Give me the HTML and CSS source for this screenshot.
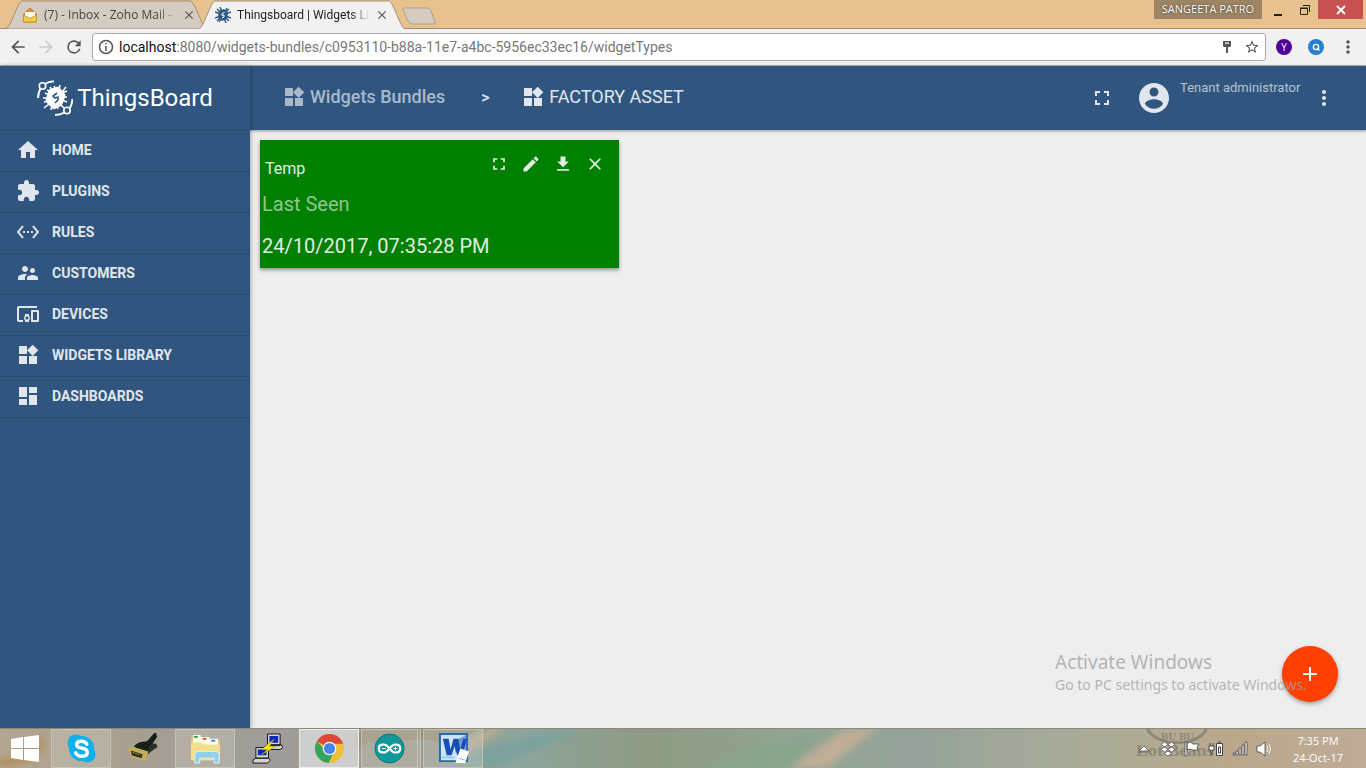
FILE: index.html
```html
<!DOCTYPE html>
<html lang="en">
<head>
<meta charset="utf-8">
<title>Thingsboard | Widgets Library</title>
<link rel="stylesheet" href="styles.css">
</head>
<body>
<svg class="sprite" aria-hidden="true">
  <symbol id="home" viewBox="0 0 24 24"><path d="M10 20v-6h4v6h5v-8h3L12 3 2 12h3v8z"/></symbol>
  <symbol id="plugin" viewBox="0 0 24 24"><path d="M20.5 11H19V7c0-1.1-.9-2-2-2h-4V3.5C13 2.12 11.88 1 10.5 1S8 2.12 8 3.5V5H4c-1.1 0-1.99.9-1.99 2v3.8H3.5c1.49 0 2.7 1.21 2.7 2.7s-1.21 2.7-2.7 2.7H2V20c0 1.1.9 2 2 2h3.8v-1.5c0-1.49 1.21-2.7 2.7-2.7 1.49 0 2.7 1.21 2.7 2.7V22H17c1.1 0 2-.9 2-2v-4h1.5c1.38 0 2.5-1.12 2.5-2.5S21.88 11 20.5 11z"/></symbol>
  <symbol id="rules" viewBox="0 0 24 24"><path d="M7.77 6.76L6.23 5.48.82 12l5.41 6.52 1.54-1.28L3.42 12l4.35-5.24zM7 13h2v-2H7v2zm10-2h-2v2h2v-2zm-6 2h2v-2h-2v2zm6.77-7.52l-1.54 1.28L20.58 12l-4.35 5.24 1.54 1.28L23.18 12l-5.41-6.52z"/></symbol>
  <symbol id="customers" viewBox="0 0 24 24"><path d="M16.5 12c1.38 0 2.49-1.12 2.49-2.5S17.88 7 16.5 7C15.12 7 14 8.12 14 9.5s1.12 2.5 2.5 2.5zM9 11c1.66 0 2.99-1.34 2.99-3S10.66 5 9 5C7.34 5 6 6.34 6 8s1.34 3 3 3zm7.5 3c-1.83 0-5.5.92-5.5 2.75V19h11v-2.25c0-1.83-3.67-2.75-5.5-2.75zM9 13c-2.33 0-7 1.17-7 3.5V19h7v-2.25c0-.85.33-2.34 2.37-3.47C10.5 13.1 9.66 13 9 13z"/></symbol>
  <symbol id="devices" viewBox="0 0 24 24"><path d="M3 6h18V4H3c-1.1 0-2 .9-2 2v12c0 1.1.9 2 2 2h4v-2H3V6zm10 6H9v1.78c-.61.55-1 1.33-1 2.22s.39 1.67 1 2.22V20h4v-1.78c.61-.55 1-1.34 1-2.22s-.39-1.67-1-2.22V12zm-2 5.5c-.83 0-1.5-.67-1.5-1.5s.67-1.5 1.5-1.5 1.5.67 1.5 1.5-.67 1.5-1.5 1.5zM22 8h-6c-.5 0-1 .5-1 1v10c0 .5.5 1 1 1h6c.5 0 1-.5 1-1V9c0-.5-.5-1-1-1zm-1 10h-4v-8h4v8z"/></symbol>
  <symbol id="widgets" viewBox="0 0 24 24"><path d="M13 13v8h8v-8h-8zM3 21h8v-8H3v8zM3 3v8h8V3H3zm13.66-1.31L11 7.34 16.66 13l5.66-5.66-5.66-5.65z"/></symbol>
  <symbol id="dashboard" viewBox="0 0 24 24"><path d="M3 13h8V3H3v10zm0 8h8v-6H3v6zm10 0h8V11h-8v10zm0-18v6h8V3h-8z"/></symbol>
  <symbol id="fullscreen" viewBox="0 0 24 24"><path d="M7 14H5v5h5v-2H7v-3zm-2-4h2V7h3V5H5v5zm12 7h-3v2h5v-5h-2v3zM14 5v2h3v3h2V5h-5z"/></symbol>
  <symbol id="account" viewBox="0 0 24 24"><path d="M12 2C6.48 2 2 6.48 2 12s4.48 10 10 10 10-4.48 10-10S17.52 2 12 2zm0 3c1.66 0 3 1.34 3 3s-1.34 3-3 3-3-1.34-3-3 1.34-3 3-3zm0 14.2c-2.5 0-4.71-1.28-6-3.22.03-1.99 4-3.08 6-3.08 1.99 0 5.97 1.09 6 3.08-1.29 1.94-3.5 3.22-6 3.22z"/></symbol>
  <symbol id="more" viewBox="0 0 24 24"><path d="M12 8c1.1 0 2-.9 2-2s-.9-2-2-2-2 .9-2 2 .9 2 2 2zm0 2c-1.1 0-2 .9-2 2s.9 2 2 2 2-.9 2-2-.9-2-2-2zm0 6c-1.1 0-2 .9-2 2s.9 2 2 2 2-.9 2-2-.9-2-2-2z"/></symbol>
  <symbol id="edit" viewBox="0 0 24 24"><path d="M3 17.25V21h3.75L17.81 9.94l-3.75-3.75L3 17.25zM20.71 7.04c.39-.39.39-1.02 0-1.41l-2.34-2.34c-.39-.39-1.02-.39-1.41 0l-1.83 1.83 3.75 3.75 1.83-1.83z"/></symbol>
  <symbol id="download" viewBox="0 0 24 24"><path d="M19 9h-4V3H9v6H5l7 7 7-7zM5 18v2h14v-2H5z"/></symbol>
  <symbol id="close" viewBox="0 0 24 24"><path d="M19 6.41L17.59 5 12 10.59 6.41 5 5 6.41 10.59 12 5 17.59 6.41 19 12 13.41 17.59 19 19 17.59 13.41 12z"/></symbol>
  <symbol id="add" viewBox="0 0 24 24"><path d="M19 13h-6v6h-2v-6H5v-2h6V5h2v6h6v2z"/></symbol>
  <symbol id="back" viewBox="0 0 24 24"><path d="M20 11H7.83l5.59-5.59L12 4l-8 8 8 8 1.41-1.41L7.83 13H20v-2z"/></symbol>
  <symbol id="forward" viewBox="0 0 24 24"><path d="M12 4l-1.41 1.41L16.17 11H4v2h12.17l-5.58 5.59L12 20l8-8z"/></symbol>
  <symbol id="reload" viewBox="0 0 24 24"><path d="M17.65 6.35A7.96 7.96 0 0 0 12 4a8 8 0 1 0 7.73 10h-2.08A6 6 0 1 1 12 6c1.66 0 3.14.69 4.22 1.78L13 11h7V4l-2.35 2.35z"/></symbol>
  <symbol id="star" viewBox="0 0 24 24"><path d="M22 9.24l-7.19-.62L12 2 9.19 8.63 2 9.24l5.46 4.73L5.82 21 12 17.27 18.18 21l-1.63-7.03L22 9.24zM12 15.4l-3.76 2.27 1-4.28-3.32-2.88 4.38-.38L12 6.1l1.71 4.04 4.38.38-3.32 2.88 1 4.28L12 15.4z"/></symbol>
</svg>

<header class="browser">
  <div class="strip">
    <div class="tab">
      <svg class="tab-shape" viewBox="0 0 200 29" preserveAspectRatio="none"><path d="M0 28.500C5 27 12 1 16 1H184C189 1 196 27 200 28.500" fill="#d5ccc1" stroke="#a18c75"/></svg>
      <svg class="favicon" viewBox="0 0 16 16"><path d="M1.500 7L8 1l6.500 6v8h-13z" fill="#d99427" stroke="#b77b20"/><path d="M3 5h10v7H3z" fill="#fff"/><path d="M1.500 8L8 11.500 14.500 8v7h-13z" fill="#f3ce4d" stroke="#c99625"/></svg>
      <span class="tab-title">(7) - Inbox - Zoho Mail -</span>
      <button class="tab-close" aria-label="Close tab"><svg><use href="#close"/></svg></button>
    </div>
    <div class="tab active">
      <svg class="tab-shape" viewBox="0 0 206 29" preserveAspectRatio="none"><path d="M0 29C5 27 12 1 16 1H190C194 1 201 27 206 29" fill="#f1f1f1" stroke="#a18c75"/></svg>
      <svg class="favicon" viewBox="0 0 16 16"><g stroke="#305680" stroke-width="1.500"><path d="M5 0l6 16M12 1L4 15M0 5l16 6M0 11l16-6M2 2l12 12M2 14L14 2"/></g><path d="M9 2l4 4-1 6-5 2-4-4 1-6z" fill="#305680"/><path d="M9.500 5.500L7 6.500v2l2-.500v2l-2 1" fill="none" stroke="#fff"/></svg>
      <span class="tab-title">Thingsboard | Widgets Li</span>
      <button class="tab-close" aria-label="Close tab"><svg><use href="#close"/></svg></button>
    </div>
    <button class="new-tab" aria-label="New tab"><svg viewBox="0 0 36 18"><path d="M3 1h23q3 0 4 3l4 11q1 2-2 2H11q-3 0-4-3L2 3q-1-2 1-2z" fill="#d5ccc1" stroke="#b49c80"/></svg></button>
    <div class="window-controls">
      <span class="profile">SANGEETA PATRO</span>
      <button class="win" aria-label="Minimize"><svg viewBox="0 0 12 12"><path d="M2 10h8v2H2z"/></svg></button>
      <button class="win" aria-label="Restore"><svg viewBox="0 0 12 12" fill="none" stroke="#222"><path d="M1.500 4.500h7v6h-7zM1 4h8M4 1.500h6.500V8"/></svg></button>
      <button class="win win-close" aria-label="Close"><svg viewBox="0 0 12 12" fill="none" stroke="#fff" stroke-width="2"><path d="M2 2l8 8M10 2l-8 8"/></svg></button>
    </div>
  </div>
  <div class="toolbar">
    <button class="tool" aria-label="Back"><svg><use href="#back"/></svg></button>
    <button class="tool disabled" aria-label="Forward" disabled><svg><use href="#forward"/></svg></button>
    <button class="tool" aria-label="Reload"><svg><use href="#reload"/></svg></button>
    <div class="address">
      <svg class="small" viewBox="0 0 16 16" fill="none" stroke="#555" stroke-width="1.500"><circle cx="8" cy="8" r="6.500"/><path d="M8 7v5M8 4v1.600"/></svg>
      <div class="url">localhost<span>:8080/widgets-bundles/c0953110-b88a-11e7-a4bc-5956ec33ec16/widgetTypes</span></div>
      <button class="tool tight" aria-label="Saved password"><svg viewBox="0 0 16 16"><path d="M4 2h8v5l-1 1H9v6H7V8H5L4 7zM6 3.500v1.200h4V3.500z" fill-rule="evenodd"/></svg></button>
      <button class="tool tight" aria-label="Bookmark"><svg><use href="#star"/></svg></button>
    </div>
    <button class="extension purple" aria-label="Y extension">Y</button>
    <button class="extension blue" aria-label="Search extension"><svg viewBox="0 0 16 16" fill="none" stroke="#fff" stroke-width="1.500"><circle cx="8" cy="8" r="3"/><path d="M9 9l3 3"/></svg></button>
    <button class="tool last" aria-label="Browser menu"><svg><use href="#more"/></svg></button>
  </div>
</header>

<div class="app">
  <aside class="sidebar">
    <div class="brand">
      <svg viewBox="0 0 36 36" fill="none" stroke="#fff" stroke-width="1.600"><path d="M19 7q2-1 3 0l6 7q1 1 0 3l-2 6q-1 2-2 3l-6 3q-2 1-3-1l-6-6q-1-2 0-3l2-7q0-2 2-3z" fill="#fff" stroke="none"/><path d="M13 7l3 5M17 6l2 4M23 5l-1 5M29 7l-4 5M25 13l5-2M26 17h4M25 20l5 2M23 24l4 4M20 25l1 4M15 25l-1 5M12 24l-5 4M12 21l-5 1M11 18H6M12 15l-4-2M14 12l-4-2"/><path d="M20 13l-4 3 2 2 3-1v3l-3 3" stroke="#305680"/><circle cx="5.500" cy="6" r="3.200"/><circle cx="30" cy="30.500" r="3.200"/><path d="M8 4q4-3 9-2.500M3.500 8.500Q1 13 1 18M33 28q2-4 2.500-9M27.500 32.500q-4 2.500-9.500 2.500" stroke-width="2"/></svg>
      <span>ThingsBoard</span>
    </div>
    <nav class="menu">
      <a href="#"><svg><use href="#home"/></svg>HOME</a>
      <a href="#"><svg><use href="#plugin"/></svg>PLUGINS</a>
      <a href="#"><svg><use href="#rules"/></svg>RULES</a>
      <a href="#"><svg><use href="#customers"/></svg>CUSTOMERS</a>
      <a href="#"><svg><use href="#devices"/></svg>DEVICES</a>
      <a href="#"><svg><use href="#widgets"/></svg>WIDGETS LIBRARY</a>
      <a href="#"><svg><use href="#dashboard"/></svg>DASHBOARDS</a>
    </nav>
  </aside>
  <section class="page">
    <header class="topbar">
      <nav class="crumbs">
        <a href="#" class="parent"><svg><use href="#widgets"/></svg>Widgets Bundles</a>
        <span class="arrow">&gt;</span>
        <span class="crumb"><svg><use href="#widgets"/></svg>FACTORY ASSET</span>
      </nav>
      <button class="icon-btn full" aria-label="Fullscreen"><svg><use href="#fullscreen"/></svg></button>
      <svg class="avatar"><use href="#account"/></svg>
      <span class="role">Tenant administrator</span>
      <button class="icon-btn" aria-label="User menu"><svg><use href="#more"/></svg></button>
    </header>
    <main class="content">
      <article class="widget">
        <div class="widget-head">
          <h2>Temp</h2>
          <div class="actions">
            <button aria-label="Fullscreen widget"><svg><use href="#fullscreen"/></svg></button>
            <button aria-label="Edit widget"><svg><use href="#edit"/></svg></button>
            <button aria-label="Export widget"><svg><use href="#download"/></svg></button>
            <button aria-label="Remove widget"><svg><use href="#close"/></svg></button>
          </div>
        </div>
        <div class="label">Last Seen</div>
        <div class="value">24/10/2017, 07:35:28 PM</div>
      </article>
      <button class="fab" aria-label="Add widget type"><svg><use href="#add"/></svg></button>
      <div class="watermark"><div class="wm-title">Activate Windows</div><div class="wm-text">Go to PC settings to activate Windows.</div></div>
    </main>
  </section>
</div>

<footer class="taskbar">
  <svg class="wallpaper" viewBox="0 0 1366 40" preserveAspectRatio="none">
    <defs>
      <linearGradient id="wall"><stop offset="0" stop-color="#b3a68f"/><stop offset=".1" stop-color="#a89f92"/><stop offset=".2" stop-color="#a09c9a"/><stop offset=".3" stop-color="#9b9a8c"/><stop offset=".38" stop-color="#8ea69d"/><stop offset=".47" stop-color="#8e9a83"/><stop offset=".58" stop-color="#92a591"/><stop offset=".67" stop-color="#95a39a"/><stop offset=".8" stop-color="#abac98"/><stop offset=".9" stop-color="#baa88c"/><stop offset="1" stop-color="#bfab96"/></linearGradient>
      <filter id="soft" x="-20%" y="-20%" width="140%" height="140%"><feGaussianBlur stdDeviation="4"/></filter>
    </defs>
    <path d="M0 0h1366v40H0z" fill="url(#wall)"/>
    <g filter="url(#soft)"><path d="M0 30q30-2 42-25q5 15-10 26L0 40z" fill="#b48c54"/><path d="M480 20l80-20h20l-80 40h-40z" fill="#7da29d"/><path d="M790 40l55-40h32l-50 40z" fill="#c0ad97"/><path d="M700 40l50-20 80-20-40 40z" fill="#8aa58e"/><path d="M450 20l40-20h15l-48 28z" fill="#c0ad91"/></g>
    <path d="M350 20Q355 1 372 0h108q-18 10-30 18-20-10-50-6-20 4-32 1-10 10-18 7z" fill="#927d5f" opacity=".5"/>
    <g class="wall-text"><ellipse cx="1177" cy="-4" rx="30" ry="18" fill="none" stroke="#8f8779" stroke-width="3"/><text x="1161" y="11" font-size="11">BU BU</text><text x="1136" y="28" font-size="18">Lot Beans</text></g>
  </svg>
  <div class="apps">
    <button class="task start" aria-label="Start"><svg viewBox="0 0 28 28" fill="#fff"><path d="M0 4l12-2v11H0zM13 2l15-2v13H13zM0 14h12v11L0 23zM13 14h15v13l-15-2z"/></svg></button>
    <button class="task open" aria-label="Skype"><svg viewBox="0 0 32 32"><circle cx="16" cy="16" r="13" fill="#0fb1ec"/><circle cx="10" cy="10" r="8.500" fill="#0fb1ec"/><circle cx="22" cy="22" r="8.500" fill="#0fb1ec"/><path d="M21.500 11.500q-1.500-3-5.500-3-5 0-5 3.500 0 2.500 5 3.500 6 1 6 4.500 0 4-6 4-4.500 0-6-3.500" fill="none" stroke="#fff" stroke-width="3.500" stroke-linecap="round"/></svg></button>
    <button class="task" aria-label="Serial terminal"><svg viewBox="0 0 32 32"><path d="M6 14q4-5 10-5 4 0 6-3l5-6h2l1 4-4 6q-1 9-7 12z" fill="#182019"/><path d="M22 14q3-4 7-3 3 4-1 5l-9 7z" fill="#2c3328"/><path d="M0 16l4-2 17 5-3 10-14-4z" fill="#c2ae56"/><path d="M3 18l12 4-1 4-10-3z" fill="#292a1b"/><path d="M5 20l8 3" stroke="#e3d797" stroke-dasharray="1 1"/></svg></button>
    <button class="task open" aria-label="File Explorer"><svg viewBox="0 0 32 32"><path d="M1 5h10l3 3h17v20H1z" fill="#e7c565"/><path d="M3 2h8v8H3zM11 4h9v8h-9zM20 6h9v8h-9z" fill="#fffbe9"/><path d="M4 3h4v2H4z" fill="#2a9d42"/><path d="M13 5h4v2h-4z" fill="#df553a"/><path d="M22 7h4v2h-4z" fill="#328fcf"/><path d="M1 10h11l2 2h17v16H1z" fill="#f6df8b"/><path d="M5 31V22q0-3 3-3h18q4 0 4 3v9h-5v-5H10v5z" fill="#94cfea" stroke="#d9f2fb"/></svg></button>
    <button class="task" aria-label="PuTTY"><svg viewBox="0 0 32 32"><g fill="#d5d5ce" stroke="#161616"><path d="M16 1h13v12H16zM13 14l4-2h13l2 3-3 2H13z"/><path d="M4 15h13v11H4zM1 28l3-2h13l2 2-3 3H1z"/></g><path d="M18 3h9v7h-9zM6 17h9v6H6z" fill="#0929c4"/><path d="M23 6L10 17h6l-7 6 15-9h-6z" fill="#f7ea18" stroke="#a98d00" stroke-width=".500"/></svg></button>
    <button class="task open current" aria-label="Chrome"><svg viewBox="0 0 32 32"><circle cx="16" cy="16" r="15" fill="#efbf3b"/><path d="M16 16L3 8.500A15 15 0 0 1 29 8.500L30 11H16z" fill="#dc493a"/><path d="M16 16l-5 1-8-8.500A15 15 0 0 0 15 31l6-12z" fill="#38a35a"/><circle cx="16" cy="16" r="7" fill="#fff"/><circle cx="16" cy="16" r="5.800" fill="#4285e8"/></svg></button>
    <button class="task open stacked" aria-label="Arduino"><svg viewBox="0 0 32 32"><circle cx="16" cy="16" r="15" fill="#12979b" stroke="#08777c"/><path d="M16 16q-4-5-7-4-4 0-4 4t4 4q3 1 7-4t7-4q4 0 4 4t-4 4q-3 1-7-4z" fill="none" stroke="#fff" stroke-width="2.200"/><path d="M8 16h4M20 16h4M22 14v4" stroke="#fff"/></svg></button>
    <button class="task open" aria-label="Word"><svg viewBox="0 0 32 32"><path d="M2 1h28v28H2z" fill="#cfe2f6" stroke="#2369b4" stroke-width="2"/><path d="M17 8l12-6v18H18z" fill="#719fda"/><path d="M5 6h6l2 11 3-11h5l2 11 3-11h4l-5 17h-5l-3-9-3 9H9z" fill="#174fae"/><path d="M20 25l3-9 9 3-4 12H18z" fill="#fff"/><path d="M4 25h13M21 26l7 2" stroke="#8aafd9"/></svg></button>
  </div>
  <div class="tray">
    <svg viewBox="0 0 16 16" fill="#fff" stroke="#666"><path d="M3 10l5-5 5 5zM3 11h10"/></svg>
    <svg viewBox="0 0 16 16" fill="#fff" stroke="#555" stroke-width=".800"><path d="M4.500 1L8 3.500 4.500 6 1 3.500zM11.500 1L15 3.500 11.500 6 8 3.500zM4.500 6L8 8.500 4.500 11 1 8.500zM11.500 6L15 8.500 11.500 11 8 8.500zM8 10l4 2.500L8 15l-4-2.500z"/></svg>
    <svg viewBox="0 0 16 16" fill="#fff" stroke="#444" stroke-width=".800"><path d="M1 1h2v14H1zM3 2q4-2 6 1h6l-2 3 1 3H9q-3-2-6 0z"/></svg>
    <svg viewBox="0 0 16 16" fill="#fff" stroke="#444"><path d="M8.500 2.500h6v12h-6z"/><path d="M10.500 6h2v6h-2zM10 1h3"/><path d="M2 2v3M5 2v3M1 5h5v4H4v5H3V9H1z"/></svg>
    <svg viewBox="0 0 16 16" fill="#fff" stroke="#444" stroke-width=".800"><path d="M1 12h2v2H1zM4 10h2v4H4zM7 7h2v7H7zM10 4h2v10h-2zM13 1h2v13h-2z"/></svg>
    <svg viewBox="0 0 16 16" fill="#fff" stroke="#444" stroke-width=".800"><path d="M1 5h3l5-4v14l-5-4H1z"/><path d="M11 5q2 3 0 6M13 3q3 5 0 10" fill="none" stroke="#fff"/></svg>
  </div>
  <div class="clock"><div>7:35 PM</div><div>24-Oct-17</div></div>
</footer>
</body>
</html>
```
FILE: styles.css
```css
* { box-sizing: border-box; }
body { margin: 0; height: 100vh; display: flex; flex-direction: column; overflow: hidden; font-family: Roboto, sans-serif; color: #e1e6ec; }
button { border: 0; padding: 0; background: none; color: inherit; font: inherit; display: flex; align-items: center; justify-content: center; }
a { color: inherit; text-decoration: none; }
svg { display: block; flex: none; fill: currentColor; }
svg[fill="none"] { fill: none; }
svg[fill="#fff"] { fill: #fff; }
.sprite { position: absolute; width: 0; height: 0; }

.browser { font-family: "Open Sans", "Noto Sans", sans-serif; color: #555; background: #f1f1f1; }
.strip { height: 29px; display: flex; padding-left: 6px; background: #e7c28e; border-bottom: 1px solid #a18c75; }
.tab { position: relative; z-index: 0; display: flex; align-items: center; width: 200px; height: 29px; padding: 0 9px 0 16px; font-size: 12px; color: #444; }
.tab.active { width: 206px; margin-left: -7px; padding-right: 15px; color: #222; z-index: 1; }
.active .tab-title { font-family: Roboto, sans-serif; }
.tab-shape { position: absolute; inset: 0; width: 100%; height: 100%; z-index: -1; }
.favicon { width: 16px; height: 16px; }
.tab-title { flex: 1; margin-left: 6px; overflow: hidden; white-space: nowrap; mask-image: linear-gradient(90deg, #000 85%, transparent); }
.tab-close { width: 16px; height: 16px; margin-left: 4px; color: #555; }
.tab-close svg { width: 14px; height: 14px; }
.new-tab { width: 36px; height: 18px; margin: 7px 0 0 -4px; }
.new-tab svg { width: 36px; height: 18px; }
.window-controls { margin-left: auto; display: flex; align-items: flex-start; color: #222; }
.profile { width: 108px; height: 19px; margin-right: 2px; background: #9d8563; color: #fff; font-size: 11px; line-height: 18px; text-align: center; text-shadow: 0 0 2px #222; }
.win { width: 27px; height: 19px; }
.win svg { width: 12px; height: 12px; }
.win-close { width: 45px; margin-right: 3px; background: #c75050; }
.toolbar { height: 37px; display: flex; align-items: center; padding: 0 8px 0 4px; border-bottom: 1px solid #b6b4b6; }
.tool { width: 28px; height: 28px; }
.tool svg { width: 20px; height: 20px; }
.tool.disabled { color: #ccc; }
.tool.last { width: 20px; }
.tool.tight { width: 25px; }
.tool.tight svg { width: 16px; height: 16px; }
.address { flex: 1; height: 28px; display: flex; align-items: center; margin: 0 10px 0 4px; padding: 0 1px 0 5px; background: #fff; border: 1px solid #aaa; border-radius: 3px; }
.small { width: 16px; height: 16px; }
.url { flex: 1; margin-left: 5px; font-family: Roboto, sans-serif; font-size: 14px; color: #111; white-space: nowrap; }
.url span { color: #777; }
.extension { width: 16px; height: 16px; border-radius: 50%; margin-right: 16px; color: #fff; font-size: 10px; }
.extension svg { width: 14px; height: 14px; }
.purple { background: #510097; }
.blue { margin-right: 14px; background: #2a7fd0; }

.app { flex: 1; min-height: 0; display: flex; background: #eee; }
.sidebar { position: relative; z-index: 2; width: 250px; background: #305680; box-shadow: 1px 0 4px rgba(0, 0, 0, .3); }
.brand { height: 64px; display: flex; align-items: center; justify-content: center; gap: 4px; color: #fff; font-size: 24px; }
.brand svg { width: 36px; height: 36px; }
.menu { border-top: 1px solid #294a6e; }
.menu a { display: flex; align-items: center; height: 41px; padding: 0 16px 2px; gap: 12px; border-bottom: 1px solid #294a6e; font-size: 14px; font-weight: 700; }
.menu svg { width: 24px; height: 24px; }
.page { flex: 1; min-width: 0; display: flex; flex-direction: column; }
.topbar { position: relative; z-index: 1; height: 64px; display: flex; align-items: center; padding: 0 30px 0 32px; background: #305680; box-shadow: 0 1px 3px rgba(0, 0, 0, .4); }
.crumbs { flex: 1; display: flex; align-items: center; font-size: 18px; padding-bottom: 2px; }
.crumbs svg { width: 24px; height: 24px; margin-right: 4px; }
.parent, .crumb { display: flex; align-items: center; line-height: 20px; }
.parent { font-weight: 500; color: #a9b9ca; }
.arrow { width: 76px; padding-left: 36px; font-size: 16px; font-weight: 500; }
.icon-btn { width: 24px; height: 24px; }
.icon-btn svg { width: 24px; height: 24px; }
.full { margin-right: 22px; }
.avatar { width: 36px; height: 36px; }
.role { align-self: flex-start; width: 124px; margin: 14px 8px 0; font-size: 13px; line-height: 16px; color: #b5c3d2; white-space: nowrap; }
.content { flex: 1; position: relative; padding: 10px; }
.widget { width: 359px; height: 128px; padding: 0 2px; background: #008000; color: #e1efe1; box-shadow: 0 2px 4px rgba(0, 0, 0, .4); }
.widget-head { display: flex; justify-content: space-between; height: 48px; }
.widget h2 { margin: 19px 0 0 3px; font-size: 16px; line-height: 20px; font-weight: 400; }
.actions { display: flex; gap: 12px; padding: 14px 12px 0 0; align-items: flex-start; }
.actions button, .actions svg { width: 20px; height: 20px; }
.label, .value { font-size: 20px; line-height: 32px; }
.label { color: #8fc78f; }
.value { margin-top: 10px; }
.fab { position: absolute; right: 28px; bottom: 26px; width: 56px; height: 56px; border-radius: 50%; background: #ff4000; color: #fff; box-shadow: 0 2px 4px rgba(0, 0, 0, .35); }
.fab svg { width: 24px; height: 24px; }
.watermark { position: absolute; right: 56px; bottom: 32px; width: 255px; color: rgba(160, 160, 160, .75); white-space: nowrap; font-family: "Noto Sans", sans-serif; pointer-events: none; }
.wm-title { font-size: 19px; line-height: 24px; }
.wm-text { font-size: 14px; line-height: 22px; }

.taskbar { position: relative; z-index: 3; height: 40px; display: flex; align-items: center; font-family: "Open Sans", "Noto Sans", sans-serif; color: #fff; border-top: 1px solid #898879; }
.wallpaper { position: absolute; inset: 0; width: 100%; height: 100%; z-index: -1; }
.wall-text { fill: #8f8779; font-family: "Liberation Serif", serif; font-weight: 700; }
.apps { flex: 1; display: flex; gap: 2px; padding-left: 1px; }
.task { width: 60px; height: 39px; }
.task svg { width: 31px; height: 31px; }
.start { width: 48px; }
.start svg { width: 28px; height: 28px; }
.open { border: 1px solid #c5c2b8; background: rgba(205, 205, 195, .35); }
.current { border-color: #eee; background: rgba(225, 228, 230, .7); }
.stacked { border-right: 4px double #c5c2b8; }
.tray { display: flex; gap: 8px; margin-right: 18px; }
.tray svg { width: 16px; height: 16px; }
.clock { width: 56px; margin-right: 20px; text-align: center; font-size: 11px; line-height: 17px; white-space: nowrap; }
```
